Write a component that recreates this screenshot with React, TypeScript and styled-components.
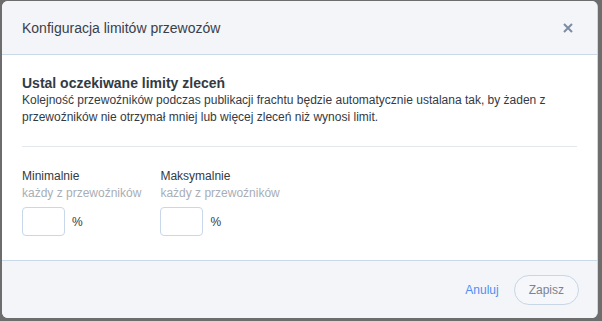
import styled, { createGlobalStyle } from 'styled-components'

const Global = createGlobalStyle`
  html, body {
    margin: 0;
    padding: 0;
    background: #6d6d6d;
  }
  body {
    font-family: "Liberation Sans", Arial, sans-serif;
    color: #333a44;
  }
`

const Modal = styled.div`
  margin: 1px 4px 3px 2px;
  width: 596px;
  height: 317px;
  box-sizing: border-box;
  display: flex;
  flex-direction: column;
  background: #fff;
  border-right: 1px solid #c7d6e8;
  border-radius: 6px;
  overflow: hidden;
`

const Header = styled.div`
  height: 54px;
  flex: none;
  box-sizing: border-box;
  display: flex;
  align-items: center;
  justify-content: space-between;
  padding: 0 22px 0 20px;
  background: #f3f5f8;
  border-bottom: 1px solid #c9d9ea;
`

const Title = styled.div`
  font-size: 14px;
  color: #3a404b;
`

const Close = styled.button`
  border: none;
  background: none;
  padding: 0;
  width: 14px;
  height: 14px;
  display: flex;
  align-items: center;
  justify-content: center;
  cursor: pointer;
`

const Body = styled.div`
  flex: 1;
  padding: 20px 20px 0;
`

const Heading = styled.div`
  font-size: 14px;
  font-weight: 700;
  line-height: 17px;
`

const Text = styled.p`
  margin: 0;
  font-size: 12px;
  line-height: 17px;
`

const Divider = styled.div`
  height: 1px;
  background: #e3e8ef;
  margin: 20px 0 21px;
`

const Fields = styled.div`
  display: flex;
  gap: 19px;
`

const Field = styled.div`
  display: flex;
  flex-direction: column;
`

const Label = styled.div<{ $muted?: boolean }>`
  font-size: 12px;
  line-height: 17px;
  color: ${(p) => (p.$muted ? '#a9aeb5' : '#333a44')};
`

const InputRow = styled.div`
  display: flex;
  align-items: center;
  gap: 7px;
  margin-top: 5px;
  font-size: 12px;
`

const Input = styled.input`
  width: 43px;
  height: 29px;
  box-sizing: border-box;
  border: 1px solid #c8d7ea;
  border-radius: 4px;
  outline: none;
`

const Footer = styled.div`
  height: 58px;
  flex: none;
  box-sizing: border-box;
  display: flex;
  align-items: center;
  justify-content: flex-end;
  gap: 15px;
  padding: 0 18px 0 0;
  background: #f3f5f8;
  border-top: 1px solid #c9d9ea;
`

const LinkButton = styled.button`
  border: none;
  background: none;
  padding: 0;
  font-family: inherit;
  font-size: 12px;
  color: #4f8ff2;
  cursor: pointer;
`

const Button = styled.button`
  height: 30px;
  padding: 0 14px;
  border: 1px solid #c8d6e6;
  border-radius: 15px;
  background: #f5f7fa;
  font-family: inherit;
  font-size: 12px;
  color: #7c8491;
`

export default function App() {
  return (
    <>
      <Global />
      <Modal>
        <Header>
          <Title>Konfiguracja limitów przewozów</Title>
          <Close aria-label="Zamknij">
            <svg width="10" height="10" viewBox="0 0 10 10">
              <path d="M1 1L9 9M9 1L1 9" stroke="#7b8ca3" strokeWidth="2" />
            </svg>
          </Close>
        </Header>
        <Body>
          <Heading>Ustal oczekiwane limity zleceń</Heading>
          <Text>
            Kolejność przewoźników podczas publikacji frachtu będzie automatycznie ustalana tak, by żaden z
            przewoźników nie otrzymał mniej lub więcej zleceń niż wynosi limit.
          </Text>
          <Divider />
          <Fields>
            <Field>
              <Label>Minimalnie</Label>
              <Label $muted>każdy z przewoźników</Label>
              <InputRow>
                <Input />%
              </InputRow>
            </Field>
            <Field>
              <Label>Maksymalnie</Label>
              <Label $muted>każdy z przewoźników</Label>
              <InputRow>
                <Input />%
              </InputRow>
            </Field>
          </Fields>
        </Body>
        <Footer>
          <LinkButton>Anuluj</LinkButton>
          <Button>Zapisz</Button>
        </Footer>
      </Modal>
    </>
  )
}
